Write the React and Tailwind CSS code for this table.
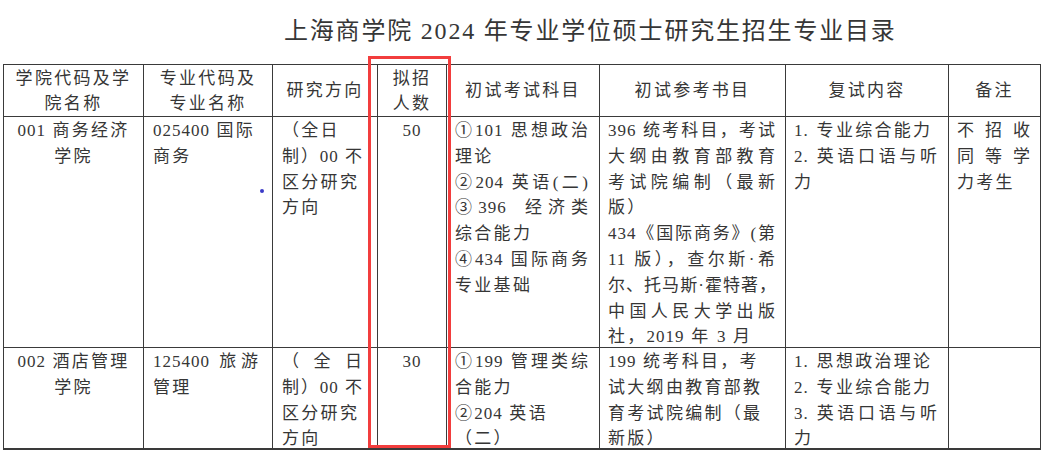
import React from "react";

const FONT = "[font-family:'Liberation_Serif','Noto_Sans_CJK_SC',serif]";

function Ln({ t, j = false, tr }) {
  const parts = t.split(/(\d+)/);
  const track = tr || (j ? "tracking-[1px]" : "tracking-[2.3px]");
  const cls = j
    ? "text-justify [text-align-last:justify] " + track
    : "whitespace-nowrap " + track;
  return (
    <div className={cls}>
      {parts.map((p, i) =>
        i % 2 ? (
          <span key={i} className="tracking-[1px]">
            {p}
          </span>
        ) : (
          <React.Fragment key={i}>{p}</React.Fragment>
        )
      )}
    </div>
  );
}

function Head({ lines }) {
  return (
    <div className="bg-white flex flex-col items-center justify-center leading-[25px] tracking-[2.3px]">
      {lines.map((l, i) => (
        <div key={i} className="whitespace-nowrap">
          {l}
        </div>
      ))}
    </div>
  );
}

export default function App() {
  return (
    <div className={"relative w-[1045px] h-[459px] bg-white text-[#363636] overflow-hidden " + FONT}>
      <div className="h-[64px] pt-[16px] pl-[284px] text-[24px] leading-[30px] tracking-[1.8px] whitespace-nowrap">
        上海商学院 2024 年专业学位硕士研究生招生专业目录
      </div>

      <div className="ml-[3px] w-[1038px] grid grid-cols-[139px_128px_104px_68px_152px_185px_162px_91px] grid-rows-[51px_230px_100px] gap-px p-px pb-[2px] bg-[#3a3a3a] text-[17px]">
        {/* header */}
        <Head lines={["学院代码及学", "院名称"]} />
        <Head lines={["专业代码及", "专业名称"]} />
        <Head lines={["研究方向"]} />
        <Head lines={["拟招", "人数"]} />
        <Head lines={["初试考试科目"]} />
        <Head lines={["初试参考书目"]} />
        <Head lines={["复试内容"]} />
        <Head lines={["备注"]} />

        {/* row 1 */}
        <div className="bg-white leading-[25.8px] pt-px flex flex-col items-center">
          <Ln t="001 商务经济" />
          <Ln t="学院" />
        </div>
        <div className="relative bg-white leading-[25.8px] pt-px pl-[9px] pr-[13px]">
          <Ln t="025400 国际" />
          <Ln t="商务" />
          <span className="absolute left-[116px] top-[72px] w-[4px] h-[4px] rounded-full bg-[#3b3bc8]" />
        </div>
        <div className="bg-white leading-[25.8px] pt-px pl-[9px] pr-[14px]">
          <Ln t="（全日" />
          <Ln t="制）00 不" j />
          <Ln t="区分研究" />
          <Ln t="方向" />
        </div>
        <div className="bg-white leading-[25.8px] pt-px flex flex-col items-center">
          <Ln t="50" />
        </div>
        <div className="bg-white leading-[25.8px] pt-px pl-[8px] pr-[10px]">
          <Ln t="①101 思想政治" j />
          <Ln t="理论" />
          <Ln t="②204 英语(二)" j />
          <div className="flex justify-between whitespace-nowrap">
            <span className="tracking-[1px]">③ 396</span>
            <span className="tracking-[6px] mr-[-5px]">经济类</span>
          </div>
          <Ln t="综合能力" />
          <Ln t="④434 国际商务" j />
          <Ln t="专业基础" />
        </div>
        <div className="bg-white leading-[25.8px] pt-px pl-[8px] pr-[9px]">
          <Ln t="396 统考科目，考试" j />
          <Ln t="大纲由教育部教育" j />
          <Ln t="考试院编制（最新" j />
          <Ln t="版）" />
          <Ln t="434《国际商务》(第" j />
          <Ln t="11 版），查尔斯·希" j />
          <Ln t="尔、托马斯·霍特著，" j tr="tracking-[0px]" />
          <Ln t="中国人民大学出版" j />
          <Ln t="社，2019 年 3 月" />
        </div>
        <div className="bg-white leading-[25.8px] pt-px pl-[8px] pr-[10px]">
          <Ln t="1. 专业综合能力" />
          <Ln t="2. 英语口语与听" j />
          <Ln t="力" />
        </div>
        <div className="bg-white leading-[25.8px] pt-px pl-[8px] pr-[9px]">
          <Ln t="不招收" j />
          <Ln t="同等学" j />
          <Ln t="力考生" />
        </div>

        {/* row 2 */}
        <div className="bg-white leading-[25.8px] pt-px flex flex-col items-center">
          <Ln t="002 酒店管理" />
          <Ln t="学院" />
        </div>
        <div className="bg-white leading-[25.8px] pt-px pl-[9px] pr-[13px]">
          <Ln t="125400 旅游" j />
          <Ln t="管理" />
        </div>
        <div className="bg-white leading-[25.8px] pt-px pl-[9px] pr-[14px]">
          <Ln t="（全日" j />
          <Ln t="制）00 不" j />
          <Ln t="区分研究" />
          <Ln t="方向" />
        </div>
        <div className="bg-white leading-[25.8px] pt-px flex flex-col items-center">
          <Ln t="30" />
        </div>
        <div className="bg-white leading-[25.8px] pt-px pl-[8px] pr-[10px]">
          <Ln t="①199 管理类综" j />
          <Ln t="合能力" />
          <Ln t="②204 英语" />
          <Ln t="（二）" />
        </div>
        <div className="bg-white leading-[25.8px] pt-px pl-[8px] pr-[9px]">
          <Ln t="199 统考科目，考" />
          <Ln t="试大纲由教育部教" />
          <Ln t="育考试院编制（最" />
          <Ln t="新版）" />
        </div>
        <div className="bg-white leading-[25.8px] pt-px pl-[8px] pr-[10px]">
          <Ln t="1. 思想政治理论" />
          <Ln t="2. 专业综合能力" />
          <Ln t="3. 英语口语与听" j />
          <Ln t="力" />
        </div>
        <div className="bg-white" />
      </div>

      <div className="absolute left-[368px] top-[56px] w-[83px] h-[392px] border-[3px] border-[#f23d3d] pointer-events-none" />
    </div>
  );
}
